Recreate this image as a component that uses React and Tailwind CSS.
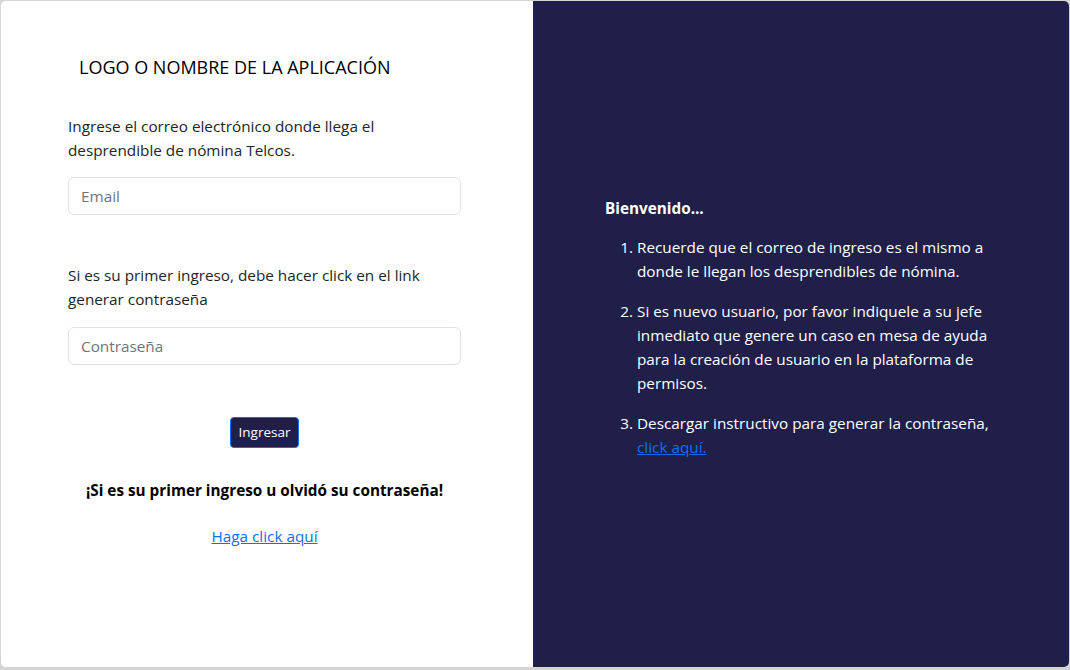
export default function App() {
  return (
    <div className="h-[670px] w-[1070px] bg-[#d4d4d4] font-['Open_Sans',sans-serif] text-[15.3px] text-[#212529]">
      <div className="grid h-[668px] grid-cols-[532px_1fr] overflow-hidden rounded-md border border-[#d6d6d6] bg-white">
        {/* Left: login form */}
        <div className="pl-[67px] pr-[72px] pt-[54px]">
          <h5 className="pl-[11px] text-[18px] leading-[24px] text-black">LOGO O NOMBRE DE LA APLICACIÓN</h5>

          <p className="mt-[35px] leading-[24px]">
            Ingrese el correo electrónico donde llega el desprendible de nómina Telcos.
          </p>
          <input
            type="email"
            placeholder="Email"
            className="mt-[15px] h-[38px] w-full rounded-md border border-[#dee2e6] px-3 text-[15.3px] placeholder:text-[#6c757d] focus:outline-none"
          />

          <p className="mt-[48px] leading-[24px]">
            Si es su primer ingreso, debe hacer click en el link generar contraseña
          </p>
          <input
            type="password"
            placeholder="Contraseña"
            className="mt-[16px] h-[38px] w-full rounded-md border border-[#dee2e6] px-3 text-[15.3px] placeholder:text-[#6c757d] focus:outline-none"
          />

          <div className="mt-[52px] flex justify-center">
            <button className="h-[31px] rounded-[4px] border border-[#0d6efd] bg-[#1f1f4a] px-2 text-[13.5px] text-white">
              Ingresar
            </button>
          </div>

          <p className="mt-[30px] text-center font-bold leading-[24px] text-black">
            ¡Si es su primer ingreso u olvidó su contraseña!
          </p>
          <p className="mt-[22px] text-center leading-[24px]">
            <a href="#" className="text-[#0d6efd] underline">Haga click aquí</a>
          </p>
        </div>

        {/* Right: welcome info */}
        <div className="flex items-center bg-[#1f1f4a] pl-[72px] pr-[68px] text-white">
          <div className="mt-[-13px]">
            <p className="font-bold leading-[24px]">Bienvenido...</p>
            <ol className="mt-[15px] list-decimal pl-8 leading-[24px]">
              <li className="mb-4">
                Recuerde que el correo de ingreso es el mismo a donde le llegan los desprendibles de nómina.
              </li>
              <li className="mb-4">
                Si es nuevo usuario, por favor indiquele a su jefe inmediato que genere un caso en mesa de ayuda para la creación de usuario en la plataforma de permisos.
              </li>
              <li>
                Descargar instructivo para generar la contraseña,{" "}
                <a href="#" className="text-[#0d6efd] underline">click aquí.</a>
              </li>
            </ol>
          </div>
        </div>
      </div>
    </div>
  );
}
